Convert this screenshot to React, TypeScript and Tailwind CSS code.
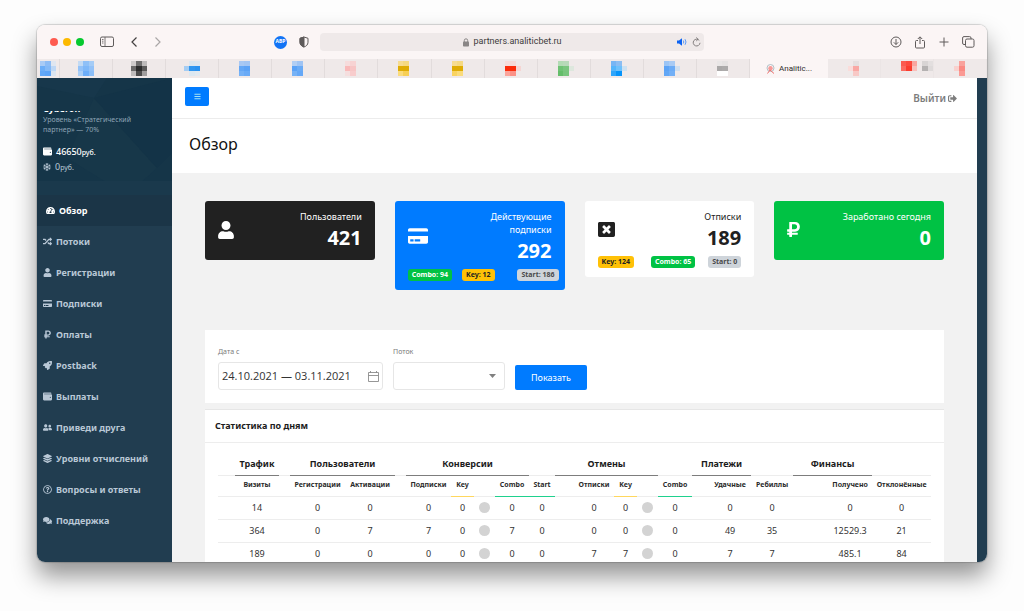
import React from "react";
import {
  FaBars,
  FaComments,
  FaCreditCard,
  FaLayerGroup,
  FaRandom,
  FaRegQuestionCircle,
  FaRegSnowflake,
  FaRocket,
  FaRubleSign,
  FaSignOutAlt,
  FaTachometerAlt,
  FaUser,
  FaUserFriends,
  FaWallet,
  FaWindowClose,
} from "react-icons/fa";
import type { IconType } from "react-icons";

// Favicon as a tiny 3x3 mosaic, "-" leaves the tile empty
function Mosaic({ tiles }: { tiles: string[] }) {
  return (
    <svg width="16" height="15" viewBox="0 0 16 15" shapeRendering="crispEdges" aria-hidden="true">
      {tiles.map((color, i) =>
        color === "-" ? null : (
          <rect
            key={i}
            x={[0, 5, 11][i % 3]}
            y={Math.floor(i / 3) * 5}
            width={i % 3 === 1 ? 6 : 5}
            height="5"
            fill={color}
          />
        )
      )}
    </svg>
  );
}

const pinnedTabs: string[][] = [
  ["#a9cbf5", "#8dbcf5", "#dfe6f0", "#6caef8", "#84b9f6", "#bdd7f5", "#62a8f8", "#5ca4f8", "#d9e4f0"],
  ["#c3daf3", "#8fc0f7", "#a5ccf6", "#93c2f8", "#7fb8f8", "#93c2f8", "#a9cef6", "#6daef9", "#8cbff8"],
  ["#cfcbcb", "#6f6e6e", "#bdbaba", "#6a6969", "#2c2c2c", "#5a5959", "#bfbcbc", "#4c4c4c", "#a19f9f"],
  ["-", "#dbe6ef", "#dfe6ee", "#a5cdf3", "#3096f0", "#2a92f0", "-", "#dce8f1", "#e2e9ef"],
  ["#a8c8f3", "#a3c5f3", "-", "#63a7f6", "#5ba2f6", "-", "#74b1f7", "#6aabf7", "-"],
  ["#b1cef4", "#9fc4f4", "-", "#5aa2f7", "#6aabf6", "-", "#76b2f6", "#65a8f7", "-"],
  ["#f6dcdc", "#f7d3d3", "-", "#f9b9b9", "#f7c5c5", "-", "#f5dede", "#f8cccc", "-"],
  ["#f6dc91", "#f5d982", "-", "#dfac04", "#dfac04", "-", "#fadb7b", "#f7cf55", "-"],
  ["#f6dc91", "#f5d982", "-", "#dfac04", "#dfac04", "-", "#f9d360", "#fadb7b", "-"],
  ["#f6dcda", "#f5dad8", "-", "#fb2c0b", "#fb2c0b", "#f5d5d3", "#fba49a", "#fb9186", "-"],
  ["#b3dbb5", "#b8d9ba", "-", "#6ec274", "#7ac57f", "#dde7dd", "#64bd6a", "#78c57d", "-"],
  ["#77b5f4", "#8bbdf2", "-", "#55b5fb", "#6fc1fb", "#cde1f1", "#2ea5fb", "#0693fa", "-"],
  ["#9bc4f5", "#a9cbf4", "-", "#5ca3f6", "#6cacf6", "#cfdff0", "#62a7f6", "#73b0f6", "-"],
  ["#e9e6e6", "#e5e2e2", "-", "#aaa8a8", "#adabab", "-", "#ffffff", "#ffffff", "-"],
];

const rightTabs: string[][][] = [
  [["-", "#e5dfdf", "-", "#fadcda", "#f9a8a4", "-", "-", "#f8c9c6", "-"]],
  [
    ["#fb5a4f", "#fc4a3e", "#f9a6a0", "#fb6a60", "#fb3c2e", "#f8c0bc", "-", "-", "-"],
    ["-", "#d8d4d4", "#e3dfdf", "-", "#b5b2b2", "#dedada", "-", "-", "-"],
  ],
  [["-", "#f9a29c", "-", "#f8d1ce", "#fa8a83", "-", "-", "#fb9a94", "-"]],
];

function tabClass(i: number) {
  if (i === 0) return "flex w-[23px] items-center justify-center border-r border-[#e2dcdc]";
  if (i < 4) return "flex flex-1 items-center justify-center border-r border-[#e2dcdc]";
  return "flex flex-1 items-center border-r border-[#e2dcdc]";
}

function BrowserBar() {
  return (
    <div className="flex h-[34px] shrink-0 items-center bg-[#fbf5f5] text-[#5f5b5b]">
      <div className="flex w-[230px] items-center pl-[13px]">
        <div className="flex gap-[5px]">
          <span className="size-2 rounded-full bg-[#fe5b50]" />
          <span className="size-2 rounded-full bg-[#fcb900]" />
          <span className="size-2 rounded-full bg-[#06c92f]" />
        </div>
        <button aria-label="Боковая панель" className="ml-4">
          <svg width="14" height="12" viewBox="0 0 14 12" fill="none" stroke="currentColor">
            <rect x="0.5" y="1" width="13" height="9.5" rx="1.5" />
            <path d="M5 1v9.5M2 3.5h1.5M2 5.2h1.5M2 7h1.5" strokeWidth="0.8" />
          </svg>
        </button>
        <button aria-label="Назад" className="ml-4">
          <svg width="8" height="12" viewBox="0 0 8 12" fill="none" stroke="#434040" strokeWidth="1.2">
            <path d="M6.5 1.5L2 6l4.500 4.500" />
          </svg>
        </button>
        <button aria-label="Вперёд" className="ml-4">
          <svg width="8" height="12" viewBox="0 0 8 12" fill="none" stroke="#aaa6a6" strokeWidth="1.2">
            <path d="M1.500 1.500L6 6l-4.500 4.500" />
          </svg>
        </button>
      </div>
      <div className="ml-[7px] flex w-[46px] shrink-0 items-center gap-3">
        <span className="flex h-[13px] w-[13px] items-center justify-center rounded-full bg-[#1273f5] text-[5px] font-bold text-white">
          ABP
        </span>
        <svg width="10" height="12" viewBox="0 0 10 12" fill="none" stroke="currentColor">
          <path d="M5 1l4 1.300v4C9 8.800 7 10.400 5 11 3 10.400 1 8.800 1 6.300v-4z" />
          <path d="M5 1L1 2.300v4C1 8.800 3 10.400 5 11z" fill="currentColor" />
        </svg>
      </div>
      <div className="flex h-[18px] flex-1 items-center rounded bg-[#efe9e9] pr-[3px]">
        <div className="flex flex-1 items-center justify-center gap-1 pl-7 font-[Roboto,sans-serif] text-[9px] text-[#3e3b3b]">
          <svg width="6" height="9" viewBox="0 0 6 9">
            <rect y="3.500" width="6" height="5" rx="0.800" fill="#8a8686" />
            <path d="M1.300 4V2.500a1.700 1.700 0 013.400 0V4" fill="none" stroke="#8a8686" />
          </svg>
          partners.analiticbet.ru
        </div>
        <svg width="10" height="8" viewBox="0 0 10 8">
          <path d="M0 2.500h2L5 .3v7.400L2 5.500H0z" fill="#0b62f2" />
          <path d="M6.300 2.500q1 1.500 0 3M8 1.200q2 2.800 0 5.600" fill="none" stroke="#4d91f7" strokeWidth="0.900" />
        </svg>
        <svg className="ml-[5px]" width="9" height="10" viewBox="0 0 9 10" fill="none" stroke="#7a7676" strokeWidth="0.900">
          <path d="M7.300 3.500A3.400 3.400 0 108 5.800M4.200 .5l1.900 1.700L4.200 4" />
        </svg>
      </div>
      <div className="flex w-[283px] items-center justify-end gap-3 pr-3">
        <button aria-label="Загрузки">
          <svg width="12" height="12" viewBox="0 0 12 12" fill="none" stroke="currentColor">
            <circle cx="6" cy="6" r="5" />
            <path d="M6 3v5.500M3.800 6.300L6 8.500l2.200-2.200" />
          </svg>
        </button>
        <button aria-label="Поделиться">
          <svg width="12" height="13" viewBox="0 0 12 13" fill="none" stroke="currentColor">
            <path d="M4 4.500H2.500a1 1 0 00-1 1V11a1 1 0 001 1h7a1 1 0 001-1V5.500a1 1 0 00-1-1H8M6 8V1M3.800 3L6 .8 8.200 3" />
          </svg>
        </button>
        <button aria-label="Новая вкладка">
          <svg width="12" height="12" viewBox="0 0 12 12" stroke="currentColor">
            <path d="M6 1.500v9M1.500 6h9" />
          </svg>
        </button>
        <button aria-label="Все вкладки">
          <svg width="13" height="12" viewBox="0 0 13 12" fill="none" stroke="currentColor">
            <path d="M3.500 8.500H2A1.400 1.400 0 01.600 7V2A1.400 1.400 0 012 .6h5.500A1.400 1.400 0 019 2v1" />
            <rect x="3.500" y="3" width="8.500" height="8.200" rx="1.500" />
          </svg>
        </button>
      </div>
    </div>
  );
}

function TabStrip() {
  return (
    <div className="flex h-[19px] shrink-0 bg-[#efe9e9]">
      {pinnedTabs.map((tiles, i) => (
        <div key={i} className={tabClass(i)}>
          <div className={i > 3 ? "ml-5" : ""}>
            <Mosaic tiles={tiles} />
          </div>
        </div>
      ))}
      <div className="flex w-[78px] items-center justify-center gap-1 bg-[#fbf5f5] font-[Roboto,sans-serif] text-[8px] text-[#2e2b2b]">
        <svg width="9" height="10" viewBox="0 0 9 10" fill="none">
          <circle cx="4.500" cy="4" r="3.500" stroke="#9fb4bd" strokeWidth="0.800" />
          <circle cx="4.500" cy="4.300" r="2.200" fill="#f79a98" />
          <path d="M1.500 9.500L4 6l4 3.500" stroke="#ee6f6c" />
        </svg>
        Analitic...
      </div>
      {rightTabs.map((icons, i) => (
        <div key={i} className="flex w-[53px] items-center border-r border-[#ebe5e5] pl-5">
          {icons.map((tiles, j) => (
            <Mosaic key={j} tiles={tiles} />
          ))}
        </div>
      ))}
    </div>
  );
}

const menu: { label: string; icon: IconType }[] = [
  { label: "Обзор", icon: FaTachometerAlt },
  { label: "Потоки", icon: FaRandom },
  { label: "Регистрации", icon: FaUser },
  { label: "Подписки", icon: FaCreditCard },
  { label: "Оплаты", icon: FaRubleSign },
  { label: "Postback", icon: FaRocket },
  { label: "Выплаты", icon: FaWallet },
  { label: "Приведи друга", icon: FaUserFriends },
  { label: "Уровни отчислений", icon: FaLayerGroup },
  { label: "Вопросы и ответы", icon: FaRegQuestionCircle },
  { label: "Поддержка", icon: FaComments },
];

function Sidebar() {
  return (
    <aside className="w-[135px] shrink-0 bg-[#213d50] text-[#b9c8d6]">
      <div className="relative h-[117px] overflow-hidden bg-[#153548] pl-[6px] pt-[33px]">
        <svg className="absolute inset-0 size-full" viewBox="0 0 135 117" preserveAspectRatio="none" aria-hidden="true">
          <path d="M0 0h70L57 20 0 8z" fill="#17374b" />
          <path d="M57 20L120 90 90 117 30 80z" fill="#173749" />
          <path d="M57 20L135 0v75l-15 15z" fill="#133347" />
          <path d="M0 103h135v14H0z" fill="#1a394c" />
        </svg>
        <div className="relative">
          <div className="flex h-[3px] items-end overflow-hidden text-[9px] font-bold leading-[10px] text-white">Cyberon</div>
          <p className="mt-px text-[7px] leading-[10px] text-[#8ea4b5]">
            Уровень «Стратегический
            <br />
            партнер» — 70%
          </p>
          <p className="mt-[9px] flex h-[15px] items-center gap-1 text-[9px] font-medium text-white">
            <FaWallet className="size-[9px]" />
            <span>
              46650<span className="text-[7px]">руб.</span>
            </span>
          </p>
          <p className="flex h-[15px] items-center gap-1 text-[9px]">
            <FaRegSnowflake className="size-2" />
            <span>
              0<span className="text-[7px]">руб.</span>
            </span>
          </p>
        </div>
      </div>
      <nav>
        {menu.map(({ label, icon: Icon }, i) => (
          <a
            key={label}
            href="#"
            className={
              i === 0
                ? "flex h-[31px] items-center gap-1 bg-[#1b3547] pl-[9px] text-[9px] font-bold text-white"
                : "flex h-[31px] items-center gap-1 pl-[6px] text-[9px] font-bold"
            }
          >
            <Icon className="h-[9px] w-auto" />
            {label}
          </a>
        ))}
      </nav>
    </aside>
  );
}

interface Badge {
  text: string;
  className: string;
}

interface StatCardProps {
  title: React.ReactNode;
  value: string;
  icon: React.ReactNode;
  className: string;
  badges?: Badge[];
}

function StatCard({ title, value, icon, className, badges }: StatCardProps) {
  return (
    <div className={`rounded-[3px] px-[13px] pt-[9px] pb-2 ${className}`}>
      <div className="flex items-center justify-between">
        <div className="mb-[3px]">{icon}</div>
        <div className="text-right">
          <p className="text-[9px] leading-[13px]">{title}</p>
          <p className="text-xl font-bold leading-[29px]">{value}</p>
        </div>
      </div>
      {badges && (
        <div className="mt-1 mb-px flex items-center">
          {badges.map((badge) => (
            <span
              key={badge.text}
              className={`whitespace-nowrap rounded-[3px] px-1 text-[7px] font-bold leading-3 ${badge.className}`}
            >
              {badge.text}
            </span>
          ))}
        </div>
      )}
    </div>
  );
}

function Filters() {
  return (
    <form className="mt-10 flex h-[73px] items-end gap-[10px] bg-white px-[13px] pb-[13px]">
      <div className="w-[165px]">
        <label htmlFor="period" className="block text-[7px] leading-[10px] text-[#7b7b7b]">
          Дата с
        </label>
        <div className="mt-[5px] flex h-7 items-center rounded-[3px] border border-[#e6e6e6] px-[3px]">
          <input
            id="period"
            defaultValue="24.10.2021 — 03.11.2021"
            className="min-w-0 flex-1 font-['Open_Sans',sans-serif] text-[11px] text-[#333] outline-none"
          />
          <svg width="11" height="11" viewBox="0 0 11 11" fill="none" stroke="#8b8b8b">
            <path d="M.5 1.500h10v9H.5zM.5 4.500h10M2.500 0v2M8.500 0v2" strokeWidth="0.900" />
          </svg>
        </div>
      </div>
      <div className="w-28">
        <label htmlFor="stream" className="block text-[7px] leading-[10px] text-[#7b7b7b]">
          Поток
        </label>
        <div className="relative mt-[5px]">
          <select id="stream" className="block h-7 w-full appearance-none rounded-[3px] border border-[#e6e6e6] bg-white">
            <option></option>
          </select>
          <svg className="pointer-events-none absolute right-[9px] top-3" width="7" height="4" viewBox="0 0 7 4">
            <path d="M0 0h7L3.500 4z" fill="#808080" />
          </svg>
        </div>
      </div>
      <button type="button" className="h-[25px] w-[72px] rounded-[2px] bg-[#007bff] text-[9px] text-white">
        Показать
      </button>
    </form>
  );
}

const columns = [
  "w-[17px]", "w-[44px]", "w-[11px]", "w-[55px]", "w-[50px]", "w-[11px]", "w-[45px]", "w-[23px]",
  "w-[21px]", "w-[34px]", "w-[26px]", "w-[19px]", "w-[40px]", "w-[23px]", "w-[21px]", "w-[34px]",
  "w-[17px]", "w-[42px]", "w-[42px]", "w-[35px]", "w-[44px]", "w-[59px]",
];

const groups = [
  { label: "", span: 1 },
  { label: "Трафик", span: 1 },
  { label: "", span: 1 },
  { label: "Пользователи", span: 2 },
  { label: "", span: 1 },
  { label: "Конверсии", span: 4 },
  { label: "", span: 1 },
  { label: "Отмены", span: 4 },
  { label: "", span: 1 },
  { label: "Платежи", span: 2 },
  { label: "", span: 1 },
  { label: "Финансы", span: 2 },
  { label: "", span: 1 },
];

const heads = [
  "", "Визиты", "", "Регистрации", "Активации", "", "Подписки", "Key", "", "Combo", "Start",
  "", "Отписки", "Key", "", "Combo", "", "Удачные", "Ребиллы", "", "Получено", "Отклонённые",
];

// "*" is the round marker
const rows = [
  ["", "14", "", "0", "0", "", "0", "0", "*", "0", "0", "", "0", "0", "*", "0", "", "0", "0", "", "0", "0"],
  ["", "364", "", "0", "7", "", "7", "0", "*", "7", "0", "", "0", "0", "*", "0", "", "49", "35", "", "12529.3", "21"],
  ["", "189", "", "0", "0", "", "0", "0", "*", "0", "0", "", "7", "7", "*", "0", "", "7", "7", "", "485.1", "84"],
];

function headBorder(label: string) {
  if (label === "Key") return "border-[#ffd75e]";
  if (label === "Combo" || label === "Start") return "border-[#1fd18e]";
  return "border-[#ededed]";
}

function DailyStats() {
  return (
    <section className="mt-[6px] border-t border-[#e6e6e6] bg-white">
      <h2 className="border-b border-[#ededed] px-[10px] text-[9px] font-bold leading-8 text-[#1c1c1c]">
        Статистика по дням
      </h2>
      <div className="px-[13px] pt-[9px]">
        <table className="w-full table-fixed border-collapse text-center">
          <colgroup>
            {columns.map((width, i) => (
              <col key={i} className={width} />
            ))}
          </colgroup>
          <thead>
            <tr className="h-[23px]">
              {groups.map((group, i) => (
                <th
                  key={i}
                  colSpan={group.span}
                  className={`whitespace-nowrap border-b p-0 text-[9px] font-bold text-[#1c1c1c] ${
                    group.label ? "border-[#7d7d7d]" : "border-[#ededed]"
                  }`}
                >
                  {group.label}
                </th>
              ))}
            </tr>
            <tr className="h-[21px]">
              {heads.map((label, i) => (
                <th key={i} className={`border-b p-0 text-[7px] font-bold text-[#2b2b2b] ${headBorder(label)}`}>
                  <span className="flex justify-center whitespace-nowrap">{label}</span>
                </th>
              ))}
            </tr>
          </thead>
          <tbody>
            {rows.map((row, r) => (
              <tr key={r} className="h-[23px] border-b border-[#ededed] text-[9px] text-[#333]">
                {row.map((cell, i) => (
                  <td key={i} className="p-0">
                    {cell === "*" ? <span className="mx-auto block size-[11px] rounded-full bg-[#d3d3d3]" /> : cell}
                  </td>
                ))}
              </tr>
            ))}
          </tbody>
        </table>
      </div>
    </section>
  );
}

const green = "bg-[#00c244] text-white";
const yellow = "bg-[#ffc107] text-[#212121]";
const gray = "bg-[#ced4da] text-[#4a4a4a]";

export default function App() {
  return (
    <div className="h-screen overflow-hidden bg-[#fdfdfd] px-[37px] pt-[25px] pb-[49px] font-['Noto_Sans',sans-serif]">
      <div className="flex h-full flex-col overflow-hidden rounded-[8px] bg-white shadow-[0_0_1px_1px_rgba(0,0,0,0.15),0_14px_24px_rgba(0,0,0,0.42)]">
        <BrowserBar />
        <TabStrip />
        <div className="flex min-h-0 flex-1">
          <Sidebar />
          <main className="min-w-0 flex-1 overflow-hidden bg-[#f2f2f2]">
            <header className="flex h-[41px] items-center justify-between border-b border-[#ececec] bg-white pr-5 pl-[13px]">
              <button
                aria-label="Меню"
                className="mb-[3px] flex h-[19px] w-6 items-center justify-center rounded-[2px] bg-[#007bff] text-[#a4e2f4]"
              >
                <FaBars className="size-[7px]" />
              </button>
              <a href="#" className="flex items-center gap-[2px] text-[10px] font-semibold text-[#7d7d7d]">
                Выйти
                <FaSignOutAlt className="size-[9px]" />
              </a>
            </header>
            <div className="bg-white px-[17px] pt-[10px] pb-[14px]">
              <h1 className="text-base leading-[30px] text-[#111]">Обзор</h1>
            </div>
            <div className="px-[33px] pt-7">
              <div className="grid h-[89px] grid-cols-4 items-start gap-5">
                <StatCard
                  title="Пользователи"
                  value="421"
                  icon={<FaUser className="h-[18px] w-4" />}
                  className="bg-[#212121] text-white"
                />
                <StatCard
                  title={
                    <>
                      Действующие
                      <br />
                      подписки
                    </>
                  }
                  value="292"
                  icon={<FaCreditCard className="h-[18px] w-5" />}
                  className="bg-[#007bff] text-white"
                  badges={[
                    { text: "Combo: 94", className: `${green}` },
                    { text: "Key: 12", className: `ml-[10px] ${yellow}` },
                    { text: "Start: 186", className: `-mr-[7px] ml-auto ${gray}` },
                  ]}
                />
                <StatCard
                  title="Отписки"
                  value="189"
                  icon={<FaWindowClose className="size-[17px]" />}
                  className="bg-white text-[#212121]"
                  badges={[
                    { text: "Key: 124", className: `${yellow}` },
                    { text: "Combo: 65", className: `ml-[17px] ${green}` },
                    { text: "Start: 0", className: `ml-auto ${gray}` },
                  ]}
                />
                <StatCard
                  title="Заработано сегодня"
                  value="0"
                  icon={<FaRubleSign className="h-[17px] w-[13px]" />}
                  className="bg-[#00c244] text-white"
                />
              </div>
              <Filters />
              <DailyStats />
            </div>
          </main>
          <div className="w-[10px] shrink-0 bg-[#213d50]" />
        </div>
      </div>
    </div>
  );
}
